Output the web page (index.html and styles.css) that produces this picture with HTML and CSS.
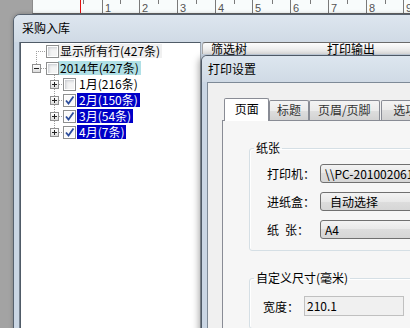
FILE: index.html
```html
<!DOCTYPE html>
<html lang="zh-CN">
<head>
  <meta charset="UTF-8" />
  <title>采购入库 - 打印设置</title>
  <link rel="stylesheet" href="styles.css">
</head>
<body>
  <div class="desk">

    <!-- ruler of the report designer behind -->
    <div class="ruler">
      <svg width="377" height="13" viewBox="0 0 377 13">
        <line class="mark" x1="47.5" y1="0" x2="47.5" y2="13" />
        <g class="tick">
          <line x1="50.5" y1="0" x2="50.5" y2="4" />
          <line x1="69.5" y1="0" x2="69.5" y2="13" />
          <line x1="87.5" y1="0" x2="87.5" y2="4" />
          <line x1="106.5" y1="0" x2="106.5" y2="13" />
          <line x1="125.5" y1="0" x2="125.5" y2="4" />
          <line x1="144.5" y1="0" x2="144.5" y2="13" />
          <line x1="163.5" y1="0" x2="163.5" y2="4" />
          <line x1="182.5" y1="0" x2="182.5" y2="13" />
          <line x1="201.5" y1="0" x2="201.5" y2="4" />
          <line x1="219.5" y1="0" x2="219.5" y2="13" />
          <line x1="239.5" y1="0" x2="239.5" y2="4" />
          <line x1="257.5" y1="0" x2="257.5" y2="13" />
          <line x1="277.5" y1="0" x2="277.5" y2="4" />
          <line x1="295.5" y1="0" x2="295.5" y2="13" />
          <line x1="314.5" y1="0" x2="314.5" y2="4" />
          <line x1="333.5" y1="0" x2="333.5" y2="13" />
          <line x1="352.5" y1="0" x2="352.5" y2="4" />
          <line x1="370.5" y1="0" x2="370.5" y2="13" />
        </g>
        <g class="num">
          <text x="72" y="12">1</text>
          <text x="109" y="12">2</text>
          <text x="147" y="12">3</text>
          <text x="185" y="12">4</text>
          <text x="222" y="12">5</text>
          <text x="260" y="12">6</text>
          <text x="298" y="12">7</text>
          <text x="336" y="12">8</text>
          <text x="373" y="12">9</text>
        </g>
      </svg>
    </div>

    <!-- 采购入库 window -->
    <div class="win win-main">
      <div class="win-title">采购入库</div>
      <div class="main-body">
        <div class="tree">
          <svg class="tree-lines" width="60" height="100">
            <path d="M15 8.5H25 M15.5 8V21 M20 25.5H25 M33.5 32V85 M38 41.5H42 M38 57.5H42 M38 73.5H42 M38 89.5H42" />
          </svg>

          <div class="node root">
            <span class="exp blank"></span><span class="chk"></span><span class="txt hover">显示所有行(427条)</span>
          </div>
          <div class="node root second">
            <span class="exp"></span><span class="chk"></span><span class="txt cur">2014年(427条)</span>
          </div>
          <div class="node child">
            <span class="exp plus"></span><span class="chk"></span><span class="txt">1月(216条)</span>
          </div>
          <div class="node child">
            <span class="exp plus"></span><span class="chk on"><svg width="11" height="11"><path d="M2 5.5L4.5 8.5L9.5 1.5" /></svg></span><span class="txt sel">2月(150条)</span>
          </div>
          <div class="node child">
            <span class="exp plus"></span><span class="chk on"><svg width="11" height="11"><path d="M2 5.5L4.5 8.5L9.5 1.5" /></svg></span><span class="txt sel">3月(54条)</span>
          </div>
          <div class="node child">
            <span class="exp plus"></span><span class="chk on"><svg width="11" height="11"><path d="M2 5.5L4.5 8.5L9.5 1.5" /></svg></span><span class="txt sel">4月(7条)</span>
          </div>
        </div>

        <div class="side">
          <div class="side-head">
            <span>筛选树</span>
            <span>打印输出</span>
          </div>
        </div>
      </div>
    </div>

    <!-- 打印设置 dialog -->
    <div class="win win-print">
      <div class="print-title">打印设置</div>
      <div class="print-body">
        <div class="tabs">
          <div class="tab on">页面</div>
          <div class="tab t-title">标题</div>
          <div class="tab t-head">页眉/页脚</div>
          <div class="tab t-opt">选项</div>
        </div>

        <div class="tab-panel">
          <fieldset class="group">
            <legend>纸张</legend>
            <div class="rows">
              <div class="field">
                <span class="lbl">打印机：</span>
                <div class="combo">\\PC-20100206126\HP LaserJet</div>
              </div>
              <div class="field">
                <span class="lbl">进纸盒：</span>
                <div class="combo pad">自动选择</div>
              </div>
              <div class="field">
                <span class="lbl">纸<i class="sp"></i>张：</span>
                <div class="combo">A4</div>
              </div>
            </div>
          </fieldset>

          <fieldset class="group size">
            <legend>自定义尺寸(毫米)</legend>
            <div class="rows">
              <div class="field">
                <span class="lbl short">宽度：</span>
                <div class="input">210.1</div>
              </div>
            </div>
          </fieldset>
        </div>
      </div>
    </div>

  </div>
</body>
</html>
```

FILE: styles.css
```css
* {
  margin: 0;
  padding: 0;
  box-sizing: border-box;
}

body {
  background: #a3a3a3;
  color: #000;
  font-family: "Noto Sans CJK SC", "Liberation Sans", sans-serif;
  font-size: 12px;
  overflow: hidden;
}

.desk {
  position: relative;
  width: 410px;
  height: 328px;
  overflow: hidden;
}

/* ruler */
.ruler {
  position: absolute;
  left: 32px;
  top: 0;
  width: 378px;
  height: 14px;
  background: #f8fcfc;
  border-left: 1px solid #8c8c8c;
  border-bottom: 1px solid #666;
}

.ruler svg {
  display: block;
}

.ruler .mark {
  stroke: #e01010;
  stroke-width: 1;
}

.ruler .tick line {
  stroke: #7a7a7a;
  stroke-width: 1;
}

.ruler .num text {
  font-family: "Liberation Sans", sans-serif;
  font-size: 11px;
  fill: #555;
}

/* windows */
.win {
  position: absolute;
  border: 1px solid #56616e;
  background: #cad6e4;
}

.win-main {
  left: 13px;
  top: 14px;
  width: 420px;
  height: 330px;
  border-radius: 7px 7px 0 0;
  box-shadow: 0 0 4px rgba(0, 0, 0, 0.25);
}

.win-title {
  height: 27px;
  line-height: 25px;
  padding-left: 8px;
  background: linear-gradient(#dde6ef, #d0dae5);
  border-radius: 6px 6px 0 0;
}

.main-body {
  display: flex;
  height: 302px;
  margin-left: 5px;
  border-left: 1px solid #76818e;
}

/* tree */
.tree {
  position: relative;
  width: 181px;
  background: #fff;
  border-left: 1px solid #505b67;
  border-top: 1px solid #505b67;
  border-right: 1px solid #9ea7b1;
}

.tree-lines {
  position: absolute;
  left: 0;
  top: 0;
}

.tree-lines path {
  fill: none;
  stroke: #a0a0a0;
  stroke-width: 1;
  stroke-dasharray: 1 1;
}

.node {
  display: flex;
  align-items: flex-start;
  height: 16px;
}

.node.root {
  padding-left: 11px;
}

.node.second {
  margin-top: 1px;
}

.node.child {
  padding-left: 29px;
}

.exp {
  position: relative;
  flex: none;
  width: 9px;
  height: 9px;
  margin-top: 4px;
  margin-right: 5px;
  border: 1px solid #919191;
  background: linear-gradient(#ffffff, #dcdcdc);
}

.child .exp {
  margin-right: 4px;
}

.exp::before {
  content: '';
  position: absolute;
  left: 1px;
  top: 3px;
  width: 5px;
  height: 1px;
  background: #222;
}

.exp.plus::after {
  content: '';
  position: absolute;
  left: 3px;
  top: 1px;
  width: 1px;
  height: 5px;
  background: #222;
}

.exp.blank {
  border: 0;
  background: none;
}

.exp.blank::before {
  display: none;
}

.chk {
  position: relative;
  flex: none;
  width: 13px;
  height: 13px;
  margin-top: 2px;
  margin-right: -1px;
  border: 1px solid #8e8f8f;
  background: #f4f4f4;
  box-shadow: inset 0 0 0 1px #fff, inset 2px 2px 3px #c6c9ce;
}

.child .chk {
  margin-right: 1px;
}

.chk.on {
  background: #fafafa;
  box-shadow: inset 0 0 0 1px #fff;
}

.chk svg {
  display: block;
}

.chk svg path {
  fill: none;
  stroke: #2c4d9c;
  stroke-width: 1.8;
}

.txt {
  height: 14px;
  margin-top: 1px;
  padding: 0 2px;
  line-height: 14px;
  white-space: nowrap;
}

.txt.hover {
  background: #f0f0f0;
}

.txt.cur {
  background: #b0e0e6;
}

.txt.sel {
  background: #0000c8;
  color: #fff;
}

/* right side header */
.side {
  flex: 1;
  padding-left: 1px;
}

.side-head {
  display: grid;
  grid-template-columns: 116px auto;
  height: 12px;
  line-height: 12px;
  border-top: 1px solid #6a6a6a;
  border-left: 1px solid #a8a8a8;
  border-top-left-radius: 3px;
  background: linear-gradient(#fdfdfd, #e2e2e2);
}

.side-head span {
  padding-left: 8px;
  white-space: nowrap;
}

/* print dialog */
.win-print {
  left: 201px;
  top: 55px;
  width: 230px;
  height: 290px;
  border-color: #4e5966;
  border-radius: 6px 0 0 0;
  box-shadow: -2px 2px 7px rgba(0, 0, 0, 0.35);
}

.print-title {
  height: 26px;
  line-height: 26px;
  padding-left: 6px;
  background: linear-gradient(#dde6ef, #d0dae5);
  border-radius: 5px 0 0 0;
}

.print-body {
  height: 262px;
  margin-left: 5px;
  padding: 15px 0 0 14px;
  background: #f0f0f0;
  border-left: 1px solid #7e8a97;
  border-top: 1px solid #7e8a97;
}

.tabs {
  display: flex;
  align-items: flex-end;
  height: 22px;
}

.tab {
  height: 20px;
  line-height: 18px;
  text-align: center;
  color: #333;
  white-space: nowrap;
  border: 1px solid #898c95;
  border-bottom: 0;
  border-radius: 2px 2px 0 0;
  background: linear-gradient(#f4f4f4 0%, #ebebeb 50%, #dedede 50%, #d2d2d2 100%);
}

.tab.on {
  position: relative;
  z-index: 1;
  width: 46px;
  height: 23px;
  line-height: 20px;
  margin: 0 0 -1px 2px;
  color: #000;
  background: #fff;
}

.t-title {
  width: 40px;
}

.t-head {
  width: 72px;
}

.t-opt {
  width: 50px;
  margin-left: 1px;
}

.tab-panel {
  height: 230px;
  border: 1px solid #898c95;
  background: #f6f6f6;
}

.group {
  margin: 20px 0 0 26px;
  padding: 0;
  min-width: 0;
  border: 1px solid #d5dfe5;
  border-radius: 3px;
  box-shadow: inset 1px 1px 0 #fff;
}

.group legend {
  margin-left: 4px;
  padding: 0 2px;
  line-height: 14px;
}

.rows {
  padding: 9px 0 11px 17px;
}

.field {
  display: flex;
  align-items: center;
  height: 19px;
}

.field + .field {
  margin-top: 9px;
}

.lbl {
  flex: none;
  width: 53px;
  white-space: nowrap;
}

.sp {
  display: inline-block;
  width: 6px;
}

.combo {
  flex: 1;
  height: 19px;
  padding-left: 4px;
  line-height: 17px;
  white-space: nowrap;
  overflow: hidden;
  border: 1px solid #707070;
  border-radius: 3px;
  background: linear-gradient(#f3f3f3, #e8e8e8 50%, #dddddd 50%, #d6d6d6);
}

.combo.pad {
  padding-left: 9px;
}

.group.size {
  margin-top: 20px;
}

.size .rows {
  padding: 11px 0 12px 13px;
}

.size .field {
  height: 20px;
}

.lbl.short {
  width: 41px;
}

.input {
  width: 100px;
  height: 20px;
  padding-left: 2px;
  line-height: 18px;
  border: 1px solid #c0c0c0;
  background: #f0f0f0;
}
```
